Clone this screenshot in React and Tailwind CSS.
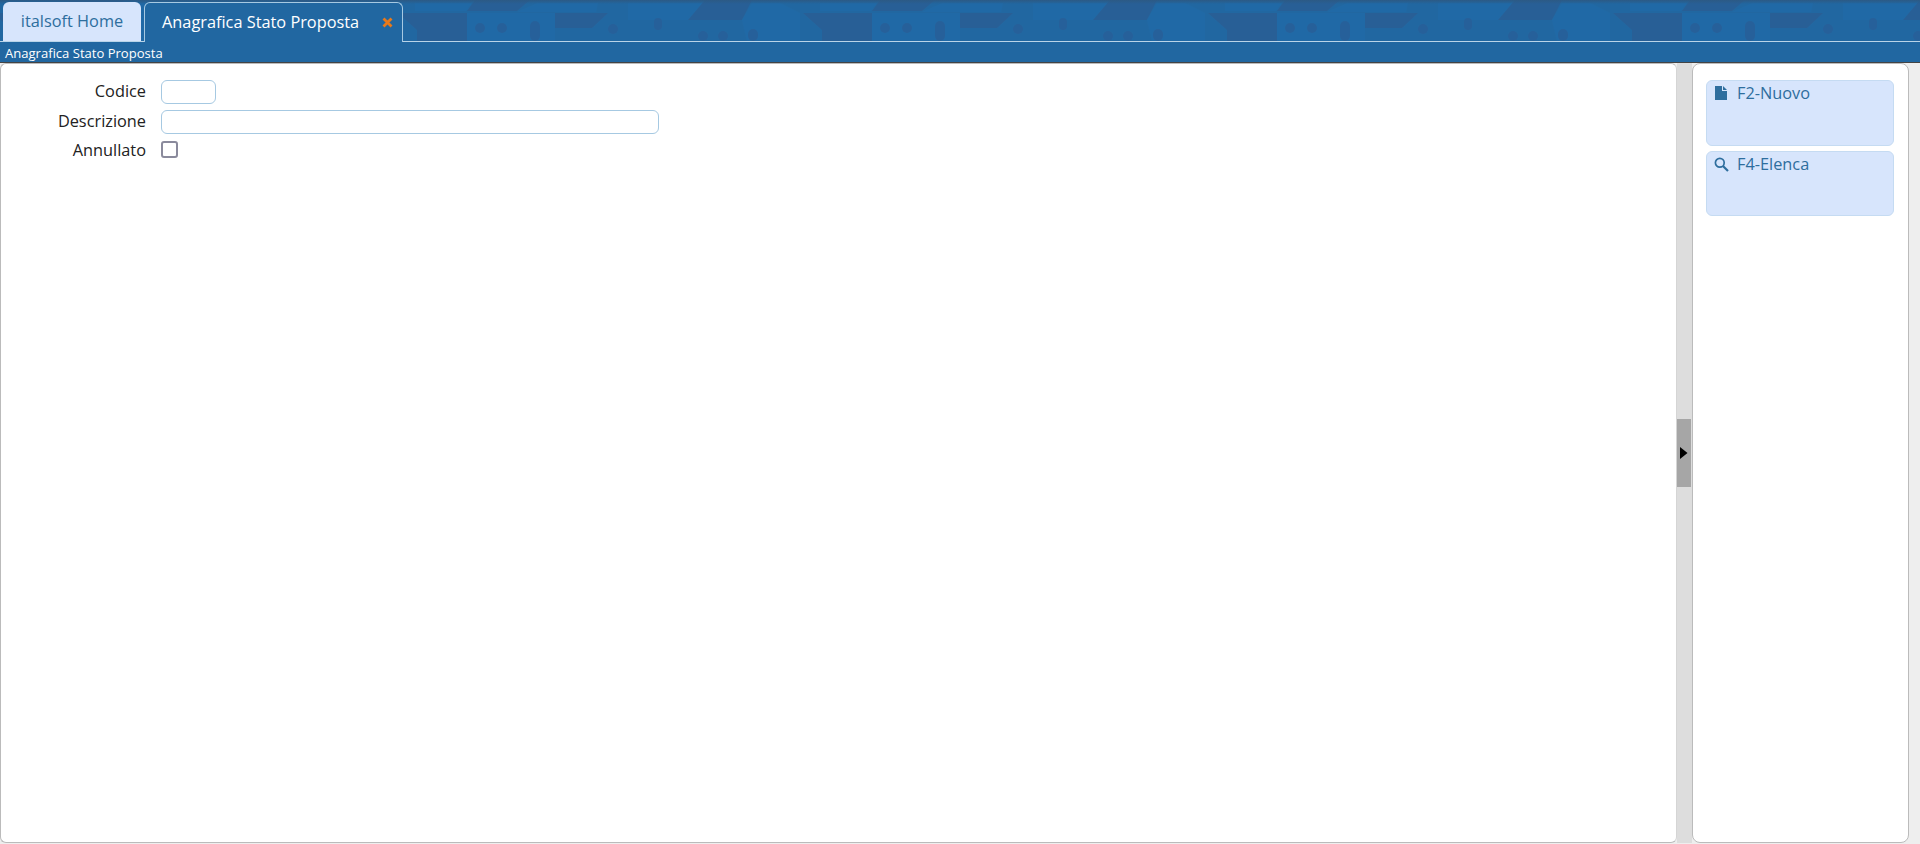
import React from "react";

function HeaderPattern() {
  const dark = "#285f96";
  const light = "#2069a6";
  const win = "#26609a";
  return (
    <svg className="absolute inset-0 h-[41px] w-full" aria-hidden="true">
      <defs>
        <pattern id="houses" width="405" height="41" patternUnits="userSpaceOnUse" patternTransform="translate(-10 0)">
          <path d="M3 13 L72 13 L72 41 L22 41 L22 30Z" fill={dark} />
          <path d="M80 0 L135 0 L122 11 L72 11Z" fill={dark} />
          <path d="M20 3 L77 3 L71 11 L20 11Z" fill={light} />
          <path d="M122 12 L143 3 L203 3 L201 12Z" fill={light} />
          <path d="M72 13 L160 13 L160 41 L72 41Z" fill={light} />
          <path d="M160 13 L213 13 L197 28 L160 28Z" fill={dark} />
          <path d="M233 3 L310 3 L293 20 L233 20Z" fill={light} />
          <path d="M310 0 L357 0 L347 20 L293 20Z" fill={dark} />
          <path d="M357 3 L385 3 L405 13 L405 41 L352 41 L347 20Z" fill={light} />
          <circle cx="85" cy="28" r="5" fill={win} />
          <circle cx="107" cy="28" r="5" fill={win} />
          <rect x="135" y="21" width="10" height="20" rx="5" fill={win} />
          <circle cx="218" cy="29" r="5" fill={win} />
          <rect x="259" y="18" width="8" height="12" rx="4" fill={win} />
          <circle cx="308" cy="36" r="5" fill={win} />
          <circle cx="328" cy="36" r="5" fill={win} />
          <rect x="353" y="29" width="10" height="12" rx="5" fill={win} />
        </pattern>
      </defs>
      <rect width="100%" height="41" fill="url(#houses)" />
    </svg>
  );
}

function Field({ label, h, labelClass, children }) {
  return (
    <div className={`flex items-center ${h}`}>
      <label className={`w-[145px] text-right text-[16.32px] text-[#222] ${labelClass}`}>{label}</label>
      <div className="ml-[15px] flex items-center">{children}</div>
    </div>
  );
}

function SideButton({ icon, label, h }) {
  return (
    <button className={`flex w-[188px] items-start rounded-[6px] border border-[#c5dbf2] bg-[#d7e5fc] pl-[5px] text-left text-[16.32px] text-[#2e6e9e] ${h}`}>
      <span className="flex h-[24px] w-[18px] items-center justify-center">{icon}</span>
      <span className="ml-[7px] leading-[24px]">{label}</span>
    </button>
  );
}

export default function App() {
  return (
    <div className="flex h-[844px] w-full flex-col overflow-hidden bg-[#eeeeee] font-['Open_Sans',sans-serif]">
      <div className="relative h-[42px] shrink-0 bg-[#2167a1]">
        <HeaderPattern />
        <div className="absolute inset-x-0 top-0 h-[4px] bg-linear-to-b from-[#2c5a85] to-transparent" />
        <div className="absolute inset-x-0 bottom-0 h-px bg-[#b9d4e8]" />
        <div className="relative flex h-full items-start pl-[3px] pt-[2px]">
          <div className="flex h-[39px] w-[138px] items-center justify-center rounded-t-[6px] bg-[#d7e5fc] text-[16.32px] text-[#2e6e9e]">
            italsoft Home
          </div>
          <div className="ml-[3px] flex h-[40px] w-[259px] items-center rounded-t-[6px] border border-b-0 border-[#a6c9e2] bg-[#2167a1] pl-[17px] text-[16.32px] text-white">
            <span>Anagrafica Stato Proposta</span>
            <svg className="ml-[23px]" width="11" height="11" viewBox="0 0 11 11" aria-hidden="true">
              <path d="M1.5 1.5 L9.5 9.5 M9.5 1.5 L1.5 9.5" stroke="#e8791a" strokeWidth="2.8" />
            </svg>
          </div>
        </div>
      </div>
      <div className="h-[21px] shrink-0 border-b border-[#444] bg-[#2167a1] pl-[5px] text-[13.06px] leading-[23px] text-white">
        Anagrafica Stato Proposta
      </div>
      <div className="flex h-[780px] shrink-0">
        <div className="w-[1677px] rounded-[6px] border border-[#bbbbbb] border-r-[#d5d5d5] bg-white pt-[13px]">
          <Field label="Codice" h="h-[30px]" labelClass="pb-[2px]">
            <input className="h-[24px] w-[55px] rounded-[6px] border border-[#a6c9e2] bg-white" />
          </Field>
          <Field label="Descrizione" h="h-[30px]" labelClass="pb-[2px]">
            <input className="h-[24px] w-[498px] rounded-[6px] border border-[#a6c9e2] bg-white" />
          </Field>
          <Field label="Annullato" h="h-[25px]" labelClass="pt-[1px]">
            <span className="block h-[17px] w-[17px] rounded-[3px] border-2 border-[#8a8a9c] bg-white" />
          </Field>
        </div>
        <div className="relative w-[15px] shrink-0 bg-[#dddddd]">
          <div className="absolute left-0 top-[356px] flex h-[68px] w-[14px] items-center justify-center bg-[#a6a6a6]">
            <svg width="8" height="12" viewBox="0 0 8 12" aria-hidden="true"><path d="M0 0 L7.5 6 L0 12Z" fill="#000" /></svg>
          </div>
        </div>
        <div className="flex w-[217px] shrink-0 flex-col gap-[5px] rounded-[8px] border border-[#bbbbbb] bg-white pl-[13px] pt-[16px]">
          <SideButton
            h="h-[66px]"
            label="F2-Nuovo"
            icon={<svg width="12" height="14" viewBox="0 0 12 14" aria-hidden="true"><path d="M0 0 H7 V5 H12 V14 H0Z M8 0 L12 4 H8Z" fill="#2e6e9e" /></svg>}
          />
          <SideButton
            h="h-[65px]"
            label="F4-Elenca"
            icon={<svg width="15" height="15" viewBox="0 0 15 15" fill="none" stroke="#2e6e9e" strokeWidth="1.7" aria-hidden="true"><circle cx="5.8" cy="5.8" r="4.4" /><path d="M9 9 L14 14" strokeWidth="2.2" /></svg>}
          />
        </div>
      </div>
    </div>
  );
}
